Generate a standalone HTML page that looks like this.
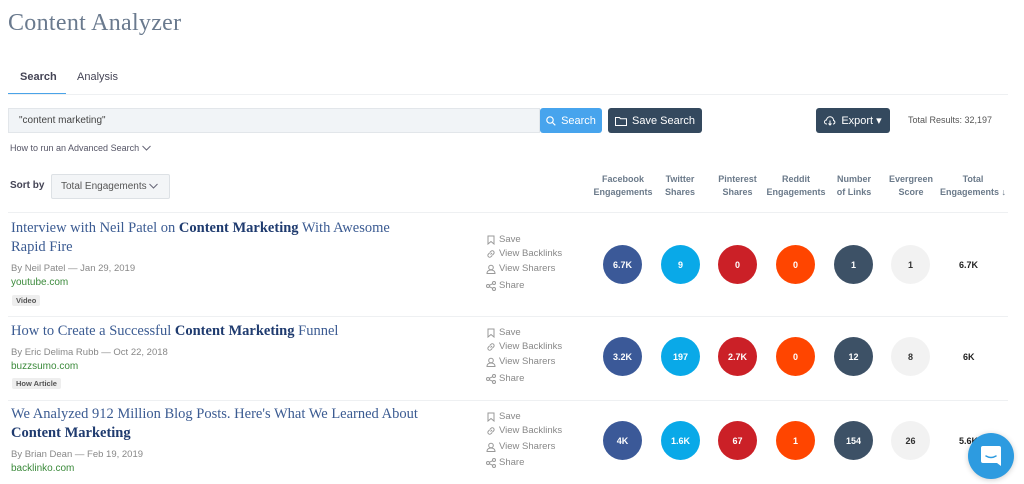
<!DOCTYPE html>
<html><head><meta charset="utf-8"><style>
body{margin:0;width:1024px;height:484px;overflow:hidden;background:#fff;font-family:"Liberation Sans",sans-serif;position:relative;color:#555}
.a{position:absolute;white-space:nowrap}
.h1{left:8px;top:10px;font-family:"Liberation Serif",serif;font-size:24px;color:#6a7a8e;letter-spacing:.3px}
.tab{font-size:11px;color:#445}
.btn{position:absolute;border-radius:3px;color:#fff;font-size:11px;display:flex;align-items:center;justify-content:center;gap:5px}
.hd{font-size:9px;color:#6b7a8a;text-align:center;line-height:13px;font-weight:bold}
.t{font-family:"Liberation Serif",serif;font-size:14.5px;color:#3b5b92;line-height:19px;white-space:normal;width:415px}
.t b{color:#1f3b6f}
.by{font-size:9.5px;color:#888}
.dm{font-size:10px;color:#3b8a3b}
.tag{font-size:7.5px;background:#eee;color:#555;padding:1px 4px;border-radius:2px;font-weight:bold}
.ac{font-size:9.5px;color:#888;left:486px;display:flex;align-items:center;gap:3px}
.ac svg{width:10px;height:10px;fill:none;stroke:#999;stroke-width:1}
.c{position:absolute;width:39px;height:39px;border-radius:50%;color:#fff;font-size:9px;font-weight:bold;display:flex;align-items:center;justify-content:center}
.tot{font-size:9px;font-weight:bold;color:#222}
.ln{position:absolute;left:8px;width:1000px;height:1px;background:#eef0f2}
</style></head><body>
<svg width="0" height="0" style="position:absolute"><defs>
<symbol id="sv" viewBox="0 0 10 10"><path d="M2 1h6v8L5 6.5 2 9z"/></symbol>
<symbol id="lk" viewBox="0 0 10 10"><path d="M4.5 5.5 6 4M3.8 3.5 5 2.3a1.8 1.8 0 0 1 2.6 2.6L6.4 6.1M6.2 6.5 5 7.7a1.8 1.8 0 0 1-2.6-2.6L3.6 3.9"/></symbol>
<symbol id="us" viewBox="0 0 10 10"><circle cx="5" cy="3.5" r="2.3"/><path d="M1 9.5c0-2.5 2-3.5 4-3.5s4 1 4 3.5z"/></symbol>
<symbol id="sh" viewBox="0 0 10 10"><circle cx="2" cy="5" r="1.5"/><circle cx="8" cy="2" r="1.5"/><circle cx="8" cy="8" r="1.5"/><path d="M3.3 4.3 6.7 2.7M3.3 5.7l3.4 1.6"/></symbol>
</defs></svg>
<div class="a h1">Content Analyzer</div>
<div class="a tab" style="left:20px;top:71px;font-weight:bold">Search</div>
<div class="a tab" style="left:77px;top:71px">Analysis</div>
<div class="a" style="left:8px;top:93px;width:58px;height:2px;background:#4aa3e8"></div>
<div class="ln" style="top:94px"></div>
<div class="a" style="left:8px;top:108px;width:532px;height:25px;background:#f1f4f7;border:1px solid #e2e6ea;box-sizing:border-box;font-size:10px;color:#444;line-height:23px;padding-left:10px">"content marketing"</div>
<div class="btn" style="left:540px;top:108px;width:62px;height:25px;background:#47a4ed"><svg width="10" height="10" viewBox="0 0 10 10" fill="none" stroke="#fff" stroke-width="1.2"><circle cx="4" cy="4" r="3.2"/><path d="M6.5 6.5 9.3 9.3"/></svg>Search</div>
<div class="btn" style="left:608px;top:108px;width:94px;height:25px;background:#34495e"><svg width="12" height="10" viewBox="0 0 12 10" fill="none" stroke="#fff" stroke-width="1"><path d="M.5 1.5h4l1 1.2h6v6.8H.5z"/></svg>Save Search</div>
<div class="btn" style="left:816px;top:108px;width:74px;height:25px;background:#34495e"><svg width="12" height="10" viewBox="0 0 12 10" fill="none" stroke="#fff" stroke-width="1"><path d="M3 8H2.5a2 2 0 0 1 0-4 3.5 3.5 0 0 1 7 .5 1.8 1.8 0 0 1 0 3.5H9M6 4.5v4.5M4.5 7.5 6 9l1.5-1.5"/></svg>Export ▾</div>
<div class="a" style="left:908px;top:115px;font-size:9px;color:#555">Total Results: 32,197</div>
<div class="a" style="left:10px;top:143px;font-size:9px;color:#556">How to run an Advanced Search <svg width="9" height="6" viewBox="0 0 9 6" fill="none" stroke="#667" stroke-width="1"><path d="M.5 1 4.5 5l4-4"/></svg></div>
<div class="a" style="left:10px;top:180px;font-size:10px;color:#445;font-weight:bold">Sort by</div>
<div class="a" style="left:51px;top:174px;width:119px;height:25px;background:#f3f5f7;border:1px solid #dde1e5;box-sizing:border-box;border-radius:2px;font-size:10px;color:#555;line-height:23px;padding-left:9px">Total Engagements <svg width="9" height="6" viewBox="0 0 9 6" fill="none" stroke="#667" stroke-width="1"><path d="M.5 1 4.5 5l4-4"/></svg></div>
<div class="a hd" style="left:590px;top:173px;width:66px">Facebook<br>Engagements</div>
<div class="a hd" style="left:660px;top:173px;width:40px">Twitter<br>Shares</div>
<div class="a hd" style="left:715px;top:173px;width:45px">Pinterest<br>Shares</div>
<div class="a hd" style="left:766px;top:173px;width:60px">Reddit<br>Engagements</div>
<div class="a hd" style="left:832px;top:173px;width:44px">Number<br>of Links</div>
<div class="a hd" style="left:886px;top:173px;width:50px">Evergreen<br>Score</div>
<div class="a hd" style="left:940px;top:173px;width:66px">Total<br>Engagements ↓</div>
<div class="ln" style="top:212px"></div>
<div class="ln" style="top:316px"></div>
<div class="ln" style="top:400px"></div>

<div class="a t" style="left:11px;top:219px">Interview with Neil Patel on <b>Content Marketing</b> With Awesome Rapid Fire</div>
<div class="a by" style="left:11px;top:263px">By Neil Patel — Jan 29, 2019</div>
<div class="a dm" style="left:11px;top:277px">youtube.com</div>
<div class="a tag" style="left:12px;top:295px">Video</div>
<div class="a ac" style="top:234px"><svg><use href="#sv"/></svg> Save</div>
<div class="a ac" style="top:248px"><svg><use href="#lk"/></svg> View Backlinks</div>
<div class="a ac" style="top:263px"><svg><use href="#us"/></svg> View Sharers</div>
<div class="a ac" style="top:280px"><svg><use href="#sh"/></svg> Share</div>

<div class="a t" style="left:11px;top:322px">How to Create a Successful <b>Content Marketing</b> Funnel</div>
<div class="a by" style="left:11px;top:347px">By Eric Delima Rubb — Oct 22, 2018</div>
<div class="a dm" style="left:11px;top:361px">buzzsumo.com</div>
<div class="a tag" style="left:12px;top:378px">How Article</div>
<div class="a ac" style="top:327px"><svg><use href="#sv"/></svg> Save</div>
<div class="a ac" style="top:341px"><svg><use href="#lk"/></svg> View Backlinks</div>
<div class="a ac" style="top:356px"><svg><use href="#us"/></svg> View Sharers</div>
<div class="a ac" style="top:373px"><svg><use href="#sh"/></svg> Share</div>

<div class="a t" style="left:11px;top:405px;width:445px">We Analyzed 912 Million Blog Posts. Here's What We Learned About <b>Content Marketing</b></div>
<div class="a by" style="left:11px;top:449px">By Brian Dean — Feb 19, 2019</div>
<div class="a dm" style="left:11px;top:463px">backlinko.com</div>
<div class="a ac" style="top:411px"><svg><use href="#sv"/></svg> Save</div>
<div class="a ac" style="top:425px"><svg><use href="#lk"/></svg> View Backlinks</div>
<div class="a ac" style="top:441px"><svg><use href="#us"/></svg> View Sharers</div>
<div class="a ac" style="top:457px"><svg><use href="#sh"/></svg> Share</div>

<div class="c" style="left:603px;top:245px;background:#3b5998">6.7K</div>
<div class="c" style="left:661px;top:245px;background:#09a9e8">9</div>
<div class="c" style="left:718px;top:245px;background:#cb2027">0</div>
<div class="c" style="left:776px;top:245px;background:#ff4500">0</div>
<div class="c" style="left:834px;top:245px;background:#3d5166">1</div>
<div class="c" style="left:891px;top:245px;background:#f2f2f2;color:#333">1</div>
<div class="a tot" style="left:959px;top:260px">6.7K</div>

<div class="c" style="left:603px;top:337px;background:#3b5998">3.2K</div>
<div class="c" style="left:661px;top:337px;background:#09a9e8">197</div>
<div class="c" style="left:718px;top:337px;background:#cb2027">2.7K</div>
<div class="c" style="left:776px;top:337px;background:#ff4500">0</div>
<div class="c" style="left:834px;top:337px;background:#3d5166">12</div>
<div class="c" style="left:891px;top:337px;background:#f2f2f2;color:#333">8</div>
<div class="a tot" style="left:963px;top:352px">6K</div>

<div class="c" style="left:603px;top:421px;background:#3b5998">4K</div>
<div class="c" style="left:661px;top:421px;background:#09a9e8">1.6K</div>
<div class="c" style="left:718px;top:421px;background:#cb2027">67</div>
<div class="c" style="left:776px;top:421px;background:#ff4500">1</div>
<div class="c" style="left:834px;top:421px;background:#3d5166">154</div>
<div class="c" style="left:891px;top:421px;background:#f2f2f2;color:#333">26</div>
<div class="a tot" style="left:959px;top:436px">5.6K</div>

<div class="a" style="left:968px;top:433px;width:46px;height:46px;border-radius:50%;background:#2d9be0;box-shadow:0 1px 6px rgba(0,0,0,.2);display:flex;align-items:center;justify-content:center">
<svg width="22" height="22" viewBox="0 0 22 22"><path d="M3 1h16a2 2 0 0 1 2 2v18l-4-3H3a2 2 0 0 1-2-2V3a2 2 0 0 1 2-2z" fill="#fff"/><path d="M6 11q5 3 10 0" stroke="#2d9be0" stroke-width="1.5" fill="none" stroke-linecap="round"/></svg></div>
</body></html>
